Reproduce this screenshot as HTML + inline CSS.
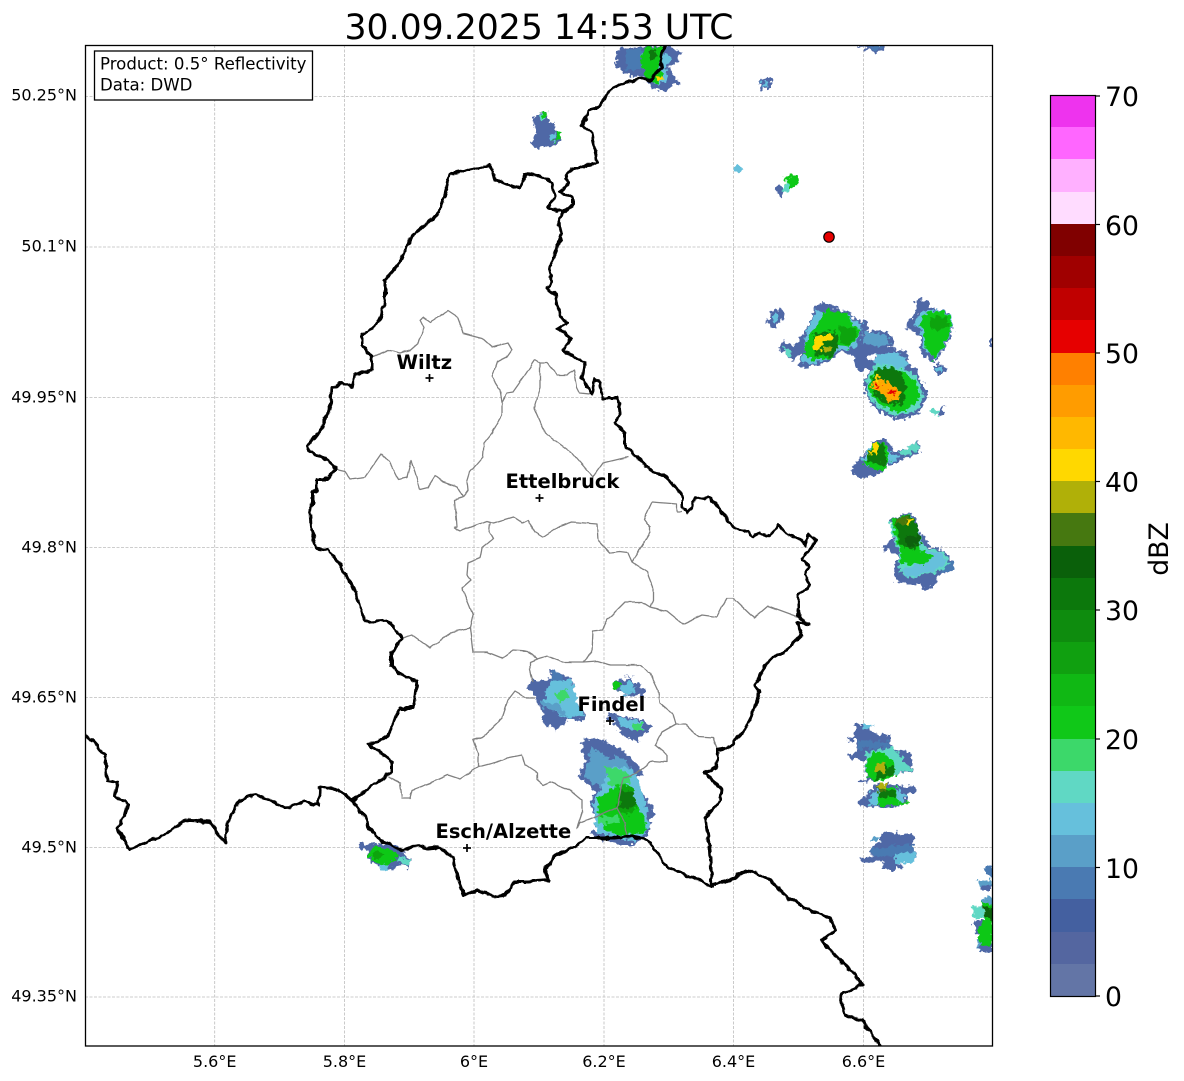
<!DOCTYPE html>
<html lang="en">
<head>
<meta charset="utf-8">
<title>30.09.2025 14:53 UTC</title>
<style>
html,body{margin:0;padding:0;background:#fff;width:1184px;height:1081px;overflow:hidden}
svg{display:block}
text{font-family:"DejaVu Sans",sans-serif;fill:#000}
.tk{font-size:16px}
.bx{font-size:16.6px}
.cb{font-size:26.67px}
.ct{font-size:19.5px;font-weight:bold}
.grid line{stroke:#bdbdbd;stroke-width:.8;stroke-dasharray:3 1.5}
.b1{fill:#5068a6}.b2{fill:#4a7ab2}.b3{fill:#5a9fc8}.c{fill:#66c0dc}.t{fill:#60d8c4}
.g1{fill:#3cd86a}.g2{fill:#10c818}.g3{fill:#10a410}.g4{fill:#0c780c}.g5{fill:#0a600a}
.ol{fill:#467810}.oy{fill:#b0b008}.y{fill:#ffd800}.o{fill:#ffa800}.r{fill:#e60000}
.gr{fill:none;stroke:#808080;stroke-width:1.3;stroke-linejoin:round}
.bd{fill:none;stroke:#000;stroke-width:3;stroke-linejoin:round;stroke-linecap:round}
.mk line{stroke:#000;stroke-width:1.7}
</style>
</head>
<body>
<svg width="1184" height="1081" viewBox="0 0 1184 1081" xmlns="http://www.w3.org/2000/svg">
<defs>
<clipPath id="cp"><rect x="85" y="45" width="907.5" height="1001"/></clipPath>
<filter id="rough" filterUnits="userSpaceOnUse" x="0" y="0" width="1184" height="1081">
<feTurbulence type="fractalNoise" baseFrequency="0.22" numOctaves="2" seed="4" result="n"/>
<feDisplacementMap in="SourceGraphic" in2="n" scale="9" xChannelSelector="R" yChannelSelector="G"/>
</filter>
<filter id="wig" filterUnits="userSpaceOnUse" x="0" y="0" width="1184" height="1081">
<feTurbulence type="fractalNoise" baseFrequency="0.13" numOctaves="2" seed="9" result="n"/>
<feDisplacementMap in="SourceGraphic" in2="n" scale="5" xChannelSelector="R" yChannelSelector="G"/>
</filter>
<filter id="wig2" filterUnits="userSpaceOnUse" x="0" y="0" width="1184" height="1081">
<feTurbulence type="fractalNoise" baseFrequency="0.12" numOctaves="1" seed="3" result="n"/>
<feDisplacementMap in="SourceGraphic" in2="n" scale="3" xChannelSelector="R" yChannelSelector="G"/>
</filter>
</defs>
<rect width="1184" height="1081" fill="#fff"/>
<text x="539" y="39" text-anchor="middle" style="font-size:34.67px">30.09.2025 14:53 UTC</text>

<g class="grid">
<line x1="214.7" y1="45" x2="214.7" y2="1046"/><line x1="344.5" y1="45" x2="344.5" y2="1046"/><line x1="474" y1="45" x2="474" y2="1046"/><line x1="604" y1="45" x2="604" y2="1046"/><line x1="733.5" y1="45" x2="733.5" y2="1046"/><line x1="863.5" y1="45" x2="863.5" y2="1046"/>
<line x1="85" y1="96.5" x2="992" y2="96.5"/><line x1="85" y1="247" x2="992" y2="247"/><line x1="85" y1="397.5" x2="992" y2="397.5"/><line x1="85" y1="547.5" x2="992" y2="547.5"/><line x1="85" y1="697.5" x2="992" y2="697.5"/><line x1="85" y1="847.5" x2="992" y2="847.5"/><line x1="85" y1="997" x2="992" y2="997"/>
</g>

<g clip-path="url(#cp)">
<g filter="url(#rough)">
<!-- storm group NE -->
<g transform="translate(760 290) scale(.33333)">
<polygon class="b1" points="25,85 40,60 65,55 72,75 55,105 35,115 22,105"/>
<polygon class="c" points="35,85 50,70 60,80 45,100"/>
<polygon class="b1" points="165,55 190,38 215,45 240,60 270,65 285,90 325,95 325,125 305,140 340,120 380,125 405,155 385,175 430,180 445,200 445,225 470,240 490,285 510,310 490,335 480,370 440,385 400,385 350,360 320,320 310,285 330,240 290,240 285,205 250,185 235,190 205,215 140,235 115,225 125,195 100,210 55,175 65,155 110,165 130,130 150,95"/>
<polygon fill="#fff" points="315,200 350,192 352,205 325,212"/>
<polygon class="c" points="170,60 240,70 270,75 285,95 310,100 300,135 280,175 255,180 230,180 205,205 150,225 125,215 135,170 140,120"/>
<polygon class="g2" points="195,60 240,65 265,70 280,105 305,120 285,155 265,175 230,165 215,205 155,210 130,190 150,130 175,100"/>
<polygon class="t" points="70,170 100,185 90,200 72,190"/>
<polygon class="g4" points="160,130 225,125 235,165 215,200 165,195"/>
<polygon class="g3" points="240,105 285,120 285,150 265,170 240,150"/>
<polygon class="y" points="165,140 215,128 220,150 190,155 185,180 160,182"/>
<polygon class="oy" points="195,170 215,175 212,185 195,185"/>
<polygon class="c" points="345,195 405,185 440,205 445,225 430,240 345,220"/>
<polygon class="b3" points="310,125 380,135 395,160 360,170 310,160"/>
<polygon class="t" points="345,220 430,235 470,260 490,320 470,365 400,380 350,350 320,310 320,270"/>
<polygon class="g2" points="345,235 425,240 465,270 480,320 460,350 410,370 370,350 335,320 325,280"/>
<polygon class="g4" points="345,240 375,230 420,240 440,290 430,340 400,345 380,340 345,320 335,270"/>
<polygon class="o" points="345,258 365,265 400,290 420,305 415,330 385,335 360,305 335,290"/>
<polygon class="y" points="345,258 362,265 360,280 340,280"/>
<polygon class="r" points="345,285 363,288 360,293 345,292"/>
<polygon class="r" points="385,300 412,303 410,308 403,316 397,308 385,305"/>
<polygon class="b1" points="465,30 495,28 520,55 570,70 580,125 560,165 530,215 510,210 485,195 480,140 440,115 440,95 470,70"/>
<polygon class="c" points="480,65 530,58 575,78 575,125 555,165 525,212 490,170 485,120 462,105"/>
<polygon class="g2" points="490,72 530,60 573,80 572,125 550,170 520,212 497,165 492,120 475,108"/>
<polygon class="g3" points="505,80 560,80 568,110 540,118 510,115"/>
<polygon class="b1" points="525,225 550,220 560,240 545,255 525,245"/>
<polygon class="c" points="528,230 545,228 545,245 530,243"/>
<polygon class="b1" points="530,362 550,350 553,370 535,378"/>
<polygon class="t" points="505,355 535,362 533,375 515,370"/>
<polygon class="b1" points="345,450 385,450 400,490 440,475 475,450 480,490 430,505 385,530 370,545 315,565 295,565 270,540 305,500"/>
<polygon class="t" points="420,488 470,455 478,478 430,500"/>
<polygon class="c" points="330,465 375,465 395,495 420,495 385,525 320,530 305,510"/>
<polygon class="g2" points="335,460 375,460 390,510 380,540 350,540 310,520 330,490"/>
<polygon class="g4" points="325,485 365,460 385,520 365,525 320,515"/>
<polygon class="y" points="340,460 355,460 355,495 325,490 340,480"/>
</g>

<!-- storms SE -->
<g transform="translate(840 500) scale(.33333)">
<polygon class="b1" points="150,60 210,35 225,50 240,100 260,115 265,140 310,150 340,190 345,205 300,225 285,250 265,268 245,268 240,250 210,255 165,240 165,225 160,195 180,180 165,155 130,150 145,120 160,120"/>
<polygon class="b2" points="300,180 340,185 345,205 305,220"/>
<polygon class="t" points="150,65 210,40 240,100 250,140 310,155 330,190 295,215 210,235 175,215 180,185 175,150 155,100"/>
<polygon class="c" points="240,150 300,155 320,185 290,210 210,232 178,210 230,195 265,175"/>
<polygon class="g2" points="155,60 205,42 235,95 245,150 280,170 250,195 185,190 175,135"/>
<polygon class="g4" points="165,60 205,45 230,70 245,130 215,150 180,135"/>
<polygon class="g5" points="195,110 240,105 240,135 200,140"/>
<polygon class="ol" points="165,55 205,50 215,72 170,72"/>
<polygon class="y" points="195,58 215,58 212,72 200,72"/>
<polygon class="b1" points="45,675 95,675 95,700 150,705 155,750 210,755 217,815 160,820 165,830 80,845 75,780 50,780 22,765 48,755 45,722 18,720 45,710"/>
<polygon class="c" points="70,672 95,672 95,688 70,688"/>
<polygon class="b2" points="50,720 150,725 150,745 50,748"/>
<polygon class="t" points="75,755 155,745 190,775 215,810 165,820 80,830"/>
<polygon class="g2" points="100,755 130,760 160,785 165,830 110,845 80,830 80,780"/>
<polygon class="g4" points="105,790 160,800 165,825 140,830 105,845 110,825"/>
<polygon class="oy" points="105,790 135,790 135,815 105,815"/>
<polygon class="b1" points="52,843 80,842 80,848 52,848"/>
<polygon class="b1" points="110,850 200,860 225,855 227,875 200,880 200,905 170,920 85,920 55,920 55,905 85,880"/>
<polygon class="c" points="90,880 115,870 170,860 200,890 175,915 90,915"/>
<polygon class="g2" points="115,860 170,860 175,915 115,915"/>
<polygon class="g4" points="112,865 170,870 170,890 115,890"/>
<polygon class="g2" points="175,905 205,903 205,912 175,915"/>
<polygon class="oy" points="112,850 140,852 140,865 112,865"/>
<polygon class="ol" points="112,865 140,865 140,877 112,877"/>
<polygon class="b1" points="125,995 150,998 220,1005 222,1045 228,1085 165,1090 195,1100 165,1110 130,1110 130,1085 65,1085 65,1072 95,1070 95,1040 120,1025"/>
<polygon class="b3" points="92,1015 120,1015 120,1023 92,1023"/>
<polygon class="b2" points="95,1045 222,1030 222,1055 160,1070 100,1070"/>
<polygon class="c" points="165,1060 222,1055 228,1085 165,1095"/>
</g>

<!-- central storms over Luxembourg -->
<g transform="translate(520 660) scale(.33333)">
<polygon class="b1" points="85,30 150,50 160,70 160,100 195,165 185,185 150,175 130,195 105,210 65,185 70,165 55,130 25,80 35,60 70,60 100,55"/>
<polygon class="c" points="100,60 155,60 165,105 190,165 140,175 70,140 80,90"/>
<polygon class="g1" points="105,100 140,85 150,115 120,125"/>
<polygon class="b3" points="60,125 120,130 140,170 85,150"/>
<polygon class="b2" points="100,30 125,45 130,65 95,58"/>
<polygon class="b1" points="315,45 380,90 370,105 330,110 295,95 275,75 295,60 340,55"/>
<polygon class="c" points="300,70 340,65 350,85 320,105 300,95"/>
<polygon class="g2" points="275,70 300,65 295,90 280,85"/>
<polygon class="b1" points="265,155 290,165 370,180 395,200 385,212 350,245 305,225 290,195 260,170"/>
<polygon class="c" points="290,170 365,185 370,210 310,205"/>
<polygon class="g1" points="335,190 365,190 365,210 340,210"/>
<polygon class="b1" points="190,240 240,235 305,270 350,310 370,345 350,350 365,395 395,440 405,460 390,490 385,525 340,555 300,555 210,525 230,490 210,430 225,395 210,375 175,350 195,300 185,270"/>
<polygon class="b3" points="215,265 300,290 340,330 310,370 240,380 190,350 205,310"/>
<polygon class="b1" points="245,240 280,260 285,300 250,290"/>
<polygon class="c" points="270,320 340,325 365,390 380,440 390,500 345,545 230,520 225,480 220,425 245,385 260,345"/>
<polygon class="g1" points="255,320 305,330 335,350 310,390 270,375"/>
<polygon class="g2" points="235,415 300,370 340,385 350,440 370,470 380,510 320,530 250,510 235,465"/>
<polygon class="g3" points="300,375 340,385 352,440 330,465 290,450"/>
<polygon class="g4" points="300,390 340,395 350,430 320,450 300,440"/>
<polygon class="g1" points="235,465 300,470 300,490 235,490"/>
<polygon fill="#fff" points="205,505 232,498 232,510 210,515"/>
</g>

<!-- south-west storm -->
<g transform="translate(340 820) scale(.33333)">
<polygon class="b1" points="60,65 80,75 110,70 165,75 215,125 205,145 185,135 150,155 120,145 80,115 85,95 55,80"/>
<polygon class="c" points="115,125 150,130 145,155 120,145"/>
<polygon class="t" points="175,105 215,125 205,140 170,125"/>
<polygon class="g2" points="100,80 140,85 175,100 165,120 130,140 80,110"/>
<polygon class="g3" points="108,90 130,100 115,120 95,108"/>
</g>

<!-- top storm -->
<g transform="translate(600 40) scale(.33333)">
<polygon class="b1" points="60,25 125,18 200,20 250,35 230,65 205,85 235,125 195,155 165,150 130,110 90,110 45,80 50,45"/>
<polygon class="b2" points="75,30 125,25 125,85 80,90"/>
<polygon class="c" points="125,45 200,40 215,60 195,90 205,115 170,140 140,115 125,80"/>
<polygon class="g2" points="135,25 190,20 180,60 175,85 190,105 180,125 160,135 135,105 120,65"/>
<polygon class="g4" points="150,30 170,30 165,60 150,60"/>
<polygon class="y" points="165,115 180,105 190,115 175,125"/>
</g>

<!-- northern small echoes -->
<g transform="translate(520 100) scale(.33333)">
<polygon class="b1" points="35,60 65,35 85,40 85,70 105,65 105,95 125,110 110,135 95,140 50,145 35,130 50,90"/>
<polygon class="t" points="55,50 65,65 75,62 78,42 62,38"/>
<polygon class="g2" points="62,38 80,35 75,55 65,55"/>
<polygon class="c" points="85,110 110,100 100,130"/>
<polygon class="g2" points="100,130 125,105 115,95 108,115"/>
<polygon class="c" points="640,205 655,195 675,208 655,220"/>
<polygon class="b1" points="763,268 780,255 795,275 785,292"/>
<polygon class="t" points="785,270 800,245 815,255 800,280"/>
<polygon class="g2" points="790,232 825,225 838,255 810,262"/>
</g>
<polygon class="b1" points="758,82 768,77 773,82 770,90 762,89"/>
<polygon class="c" points="760,83 767,81 768,87 763,88"/>
<polygon class="b1" points="856,45 886,45 883,51 876,54 868,50"/>
<polygon class="b2" points="868,46 883,46 878,51 870,50"/>
<polygon class="b1" points="989,338 993,337 993,348 989,346"/>

<!-- east edge -->
<g transform="translate(940 850) scale(.33333)">
<polygon class="b2" points="135,50 160,45 160,80 140,75"/>
<polygon class="b3" points="110,95 155,85 155,110 115,110"/>
<polygon class="b1" points="115,110 155,105 155,120 115,120"/>
<polygon class="b3" points="125,145 160,140 160,165 130,160"/>
<polygon class="t" points="95,170 130,168 135,205 100,205"/>
<polygon class="b1" points="100,215 160,205 160,250 105,250"/>
<polygon class="b3" points="110,265 160,255 160,305 115,300"/>
<polygon class="g2" points="130,150 160,170 160,300 120,295 115,235 135,205"/>
<polygon class="g5" points="130,165 160,180 160,210 135,200"/>
<polygon class="b1" points="115,290 160,285 160,305 118,302"/>
</g>
</g>

<!-- canton boundaries -->
<g filter="url(#wig2)">
<path class="gr" d="M372,357 388,350 400,353 410,350 418,343 424,328 420,320 423,317 430,322 440,316 448,311 457,317 463,333 482,338 492,347 508,343 512,350 507,357 497,362 492,377 500,390 502,402 502,415 492,433 484,443 483,457 470,472 467,482 468,490 463,497"/>
<path class="gr" d="M336,470 345,472 350,479 365,477 381,454 390,463 398,479 407,477 411,461 415,472 420,489 428,487 435,476 443,482 457,487 463,497 455,500 457,527 454,528 460,531 487,521 493,523 513,517 522,523 528,520 535,532 543,537 558,527 572,522 597,524 598,540 610,553 620,552 628,553 632,562 647,572 653,587 653,600 650,607"/>
<path class="gr" d="M502,402 507,393 513,392 525,375 535,360 540,363 540,387 534,408 545,433 572,453 593,477 603,463 628,457"/>
<path class="gr" d="M540,363 547,363 557,375 567,375 574,370 577,387 580,393 590,394"/>
<path class="gr" d="M632,562 650,532 650,527 644,519 652,502 677,504 677,512 682,512"/>
<path class="gr" d="M490,523 489,532 493,539 482,548 480,558 468,563 467,575 471,580 462,588 473,615 470,628 473,652 487,652 502,658 513,650 528,651 537,659 547,656 563,662 583,662 597,661 610,665 640,665 650,673 658,690 660,703 673,714 676,724 685,724 698,737 713,738 718,750"/>
<path class="gr" d="M470,628 452,632 430,648 412,635 403,638"/>
<path class="gr" d="M583,662 592,652 593,631 602,630 607,620 625,602 642,602 650,607 667,611 683,624 702,615 717,617 722,607 727,598 733,598 754,618 768,606 798,617"/>
<path class="gr" d="M676,724 662,732 655,745 667,755 667,762 652,761 637,773 623,778 618,803 617,808 625,823 627,837"/>
<path class="gr" d="M617,808 593,818 580,823 577,828 582,813 582,800 570,790 550,782 543,785 537,780 537,773 525,765 522,755 507,758 497,762 478,767 460,779 448,775 430,783 412,790 410,798 402,798 400,783 388,777"/>
<path class="gr" d="M537,659 530,662 530,670 533,682 M535,698 527,698 515,691 508,700 502,718 483,737 473,740 478,753 478,767"/>
</g>

<!-- national borders -->
<g filter="url(#wig)">
<path class="bd" d="M665,45 660,57 662,68 650,80 642,78 625,83 610,90 605,98 598,108 588,110 585,120 582,125 592,133 595,150 597,162 580,168 572,168 565,178 569,183 560,192 573,198 573,205 563,212 558,225 562,233 557,248 553,258 549,268 552,280 547,288 556,295 557,300 560,317 568,323 558,328 570,338 563,350 585,363 582,378 592,395 595,378 600,383 603,398 618,398 620,413 615,423 625,433 625,447 632,452 650,470 668,478 678,490 682,495 682,508 687,512 692,508 695,498 710,497 733,527 748,532 753,537 760,533 770,536 778,525 788,535 802,540 805,546 808,535 817,540 802,558 809,567 805,575 810,585 798,595 799,617 808,625 797,622 802,635 783,653 772,657 763,670 755,685 760,692 748,725 730,747 718,750 717,767 705,773 722,790 720,800 705,818 710,850 712,888"/>
<path class="bd" d="M712,888 700,880 685,875 668,868 655,850 647,840 630,836 615,838 587,838 575,847 555,855 545,870 548,880 528,882 515,882 505,895 495,897 478,890 464,895 458,880 453,857 438,847 427,848 417,845 403,850 383,842 368,828 367,820 358,808 352,800 392,772 392,762 380,752 368,744 378,742 388,735 395,720 400,708 413,708 417,682 398,673 392,665 392,652 403,638 388,620 365,622 355,590 340,565 328,550 316,548 311,527 310,510 313,503 313,493 317,490 317,479 328,479 332,473 336,468 327,460 310,452 307,446 315,437 322,428 331,403 332,388 342,383 352,387 355,375 372,370 372,358 362,345 362,335 375,327 382,313 385,300 385,280 400,262 410,238 440,212 450,175 490,165 495,180 520,189 525,174 537,175 552,183 555,197 548,208 563,212"/>
<path class="bd" d="M85,733 105,755 107,780 118,782 115,795 128,805 125,815 118,828 130,850 150,840 165,835 185,820 210,822 225,843 228,820 240,800 255,795 275,802 285,808 305,802 318,805 320,787 338,790 352,800"/>
<path class="bd" d="M712,885 730,880 748,870 770,880 785,895 805,908 830,918 835,930 822,940 835,955 855,975 862,985 840,995 845,1015 862,1020 880,1046"/>
</g>
</g>

<!-- city markers and labels -->
<g class="mk">
<line x1="425.5" y1="378" x2="433.5" y2="378"/><line x1="429.5" y1="374" x2="429.5" y2="382"/>
<line x1="535.5" y1="498" x2="543.5" y2="498"/><line x1="539.5" y1="494" x2="539.5" y2="502"/>
<line x1="606" y1="721" x2="614" y2="721"/><line x1="610" y1="717" x2="610" y2="725"/>
<line x1="463" y1="848" x2="471" y2="848"/><line x1="467" y1="844" x2="467" y2="852"/>
</g>
<text class="ct" x="396.5" y="369">Wiltz</text>
<text class="ct" x="505.5" y="488">Ettelbruck</text>
<text class="ct" x="577.5" y="711">Findel</text>
<text class="ct" x="435.5" y="838">Esch/Alzette</text>

<circle cx="829" cy="237" r="5.2" fill="#e60000" stroke="#000" stroke-width="1.2"/>

<!-- info box -->
<rect x="94.5" y="51" width="218" height="49" fill="#fff" stroke="#000" stroke-width="1.3"/>
<text class="bx" x="100" y="69.5">Product: 0.5° Reflectivity</text>
<text class="bx" x="100" y="90.5">Data: DWD</text>

<!-- frame -->
<rect x="85.5" y="45.5" width="907" height="1000.5" fill="none" stroke="#000" stroke-width="1.3"/>

<!-- axis labels -->
<g class="tk" text-anchor="end">
<text x="77" y="100.5">50.25°N</text>
<text x="77" y="251.5">50.1°N</text>
<text x="77" y="402.5">49.95°N</text>
<text x="77" y="552.5">49.8°N</text>
<text x="77" y="702.5">49.65°N</text>
<text x="77" y="852.5">49.5°N</text>
<text x="77" y="1001.5">49.35°N</text>
</g>
<g class="tk" text-anchor="middle">
<text x="214.7" y="1067">5.6°E</text>
<text x="344.5" y="1067">5.8°E</text>
<text x="474" y="1067">6°E</text>
<text x="604" y="1067">6.2°E</text>
<text x="733.5" y="1067">6.4°E</text>
<text x="863.5" y="1067">6.6°E</text>
</g>

<!-- colorbar -->
<g shape-rendering="crispEdges">
<rect x="1050" y="95" width="45" height="32" fill="#ee33ee"/>
<rect x="1050" y="127" width="45" height="32" fill="#ff66ff"/>
<rect x="1050" y="159" width="45" height="33" fill="#ffb0ff"/>
<rect x="1050" y="192" width="45" height="32" fill="#ffdcff"/>
<rect x="1050" y="224" width="45" height="32" fill="#800000"/>
<rect x="1050" y="256" width="45" height="32" fill="#a00000"/>
<rect x="1050" y="288" width="45" height="32" fill="#c00000"/>
<rect x="1050" y="320" width="45" height="33" fill="#e60000"/>
<rect x="1050" y="353" width="45" height="32" fill="#ff8000"/>
<rect x="1050" y="385" width="45" height="32" fill="#ff9c00"/>
<rect x="1050" y="417" width="45" height="32" fill="#ffb800"/>
<rect x="1050" y="449" width="45" height="32" fill="#ffd800"/>
<rect x="1050" y="481" width="45" height="32" fill="#b0b008"/>
<rect x="1050" y="513" width="45" height="33" fill="#467810"/>
<rect x="1050" y="546" width="45" height="32" fill="#0a600a"/>
<rect x="1050" y="578" width="45" height="32" fill="#0c780c"/>
<rect x="1050" y="610" width="45" height="32" fill="#0e8c0e"/>
<rect x="1050" y="642" width="45" height="32" fill="#10a010"/>
<rect x="1050" y="674" width="45" height="32" fill="#10b814"/>
<rect x="1050" y="706" width="45" height="33" fill="#10c818"/>
<rect x="1050" y="739" width="45" height="32" fill="#3cd86a"/>
<rect x="1050" y="771" width="45" height="32" fill="#60d8c4"/>
<rect x="1050" y="803" width="45" height="32" fill="#66c0dc"/>
<rect x="1050" y="835" width="45" height="32" fill="#5a9fc8"/>
<rect x="1050" y="867" width="45" height="32" fill="#4a7ab2"/>
<rect x="1050" y="899" width="45" height="33" fill="#4460a0"/>
<rect x="1050" y="932" width="45" height="32" fill="#5466a0"/>
<rect x="1050" y="964" width="45" height="32" fill="#6375a6"/>
</g>
<rect x="1050.5" y="95.5" width="45" height="901" fill="none" stroke="#000" stroke-width="1.2"/>
<g stroke="#000" stroke-width="1.2">
<line x1="1095" y1="96" x2="1100" y2="96"/><line x1="1095" y1="224.5" x2="1100" y2="224.5"/><line x1="1095" y1="353" x2="1100" y2="353"/><line x1="1095" y1="481.5" x2="1100" y2="481.5"/><line x1="1095" y1="610" x2="1100" y2="610"/><line x1="1095" y1="739" x2="1100" y2="739"/><line x1="1095" y1="867.5" x2="1100" y2="867.5"/><line x1="1095" y1="996" x2="1100" y2="996"/>
</g>
<g class="cb">
<text x="1105" y="106">70</text>
<text x="1105" y="235">60</text>
<text x="1105" y="363">50</text>
<text x="1105" y="491.5">40</text>
<text x="1105" y="620">30</text>
<text x="1105" y="749">20</text>
<text x="1105" y="878">10</text>
<text x="1105" y="1006">0</text>
</g>
<text class="cb" transform="translate(1168 549) rotate(-90)" text-anchor="middle">dBZ</text>
</svg>
</body>
</html>
